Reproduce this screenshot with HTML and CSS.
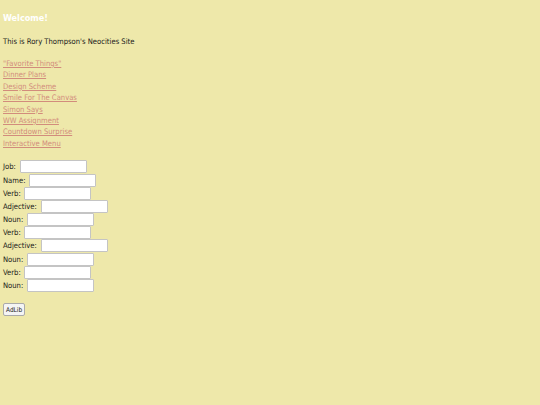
FILE: index.html
```html
<!DOCTYPE html>
<html>
<head>
<meta charset="utf-8">
<title>Rory Thompson's Neocities Site</title>
<link rel="stylesheet" href="styles.css">
</head>
<body>
<h1 class="title">Welcome!</h1>
<p class="intro">This is Rory Thompson's Neocities Site</p>
<nav class="links">
<a href="#">"Favorite Things"</a>
<a href="#">Dinner Plans</a>
<a href="#">Design Scheme</a>
<a href="#">Smile For The Canvas</a>
<a href="#">Simon Says</a>
<a href="#">WW Assignment</a>
<a href="#">Countdown Surprise</a>
<a href="#">Interactive Menu</a>
</nav>
<form class="adlib">
<div class="row">Job: <input type="text"></div>
<div class="row">Name: <input type="text"></div>
<div class="row">Verb: <input type="text"></div>
<div class="row">Adjective: <input type="text"></div>
<div class="row">Noun: <input type="text"></div>
<div class="row">Verb: <input type="text"></div>
<div class="row">Adjective: <input type="text"></div>
<div class="row">Noun: <input type="text"></div>
<div class="row">Verb: <input type="text"></div>
<div class="row">Noun: <input type="text"></div>
<button type="button" class="btn">AdLib</button>
</form>
</body>
</html>
```
FILE: styles.css
```css
html, body {
  margin: 0;
  padding: 0;
  background: #eee8aa;
}
body {
  padding: 0 3px;
  font-family: "DejaVu Sans Condensed", "DejaVu Sans", sans-serif;
  font-stretch: condensed;
  font-size: 7.6px;
  color: #1a1a1a;
}
.title {
  margin: 12px 0 0;
  font-size: 9px;
  line-height: 12px;
  font-weight: bold;
  color: #fff;
}
.intro {
  margin: 12px 0 0;
  line-height: 12px;
}
.links {
  margin-top: 10px;
  display: flex;
  flex-direction: column;
  align-items: flex-start;
}
.links a {
  color: #d28c7c;
  line-height: 11.4px;
}
.adlib {
  margin-top: 11px;
}
.row {
  height: 13.2px;
  display: flex;
  align-items: center;
  white-space: pre;
}
.row input {
  width: 63px;
  height: 11px;
  margin: 0 0 0 1.5px;
  padding: 0 1px;
  border: 1px solid #c4c4c4;
  border-radius: 1px;
  background: #fff;
  font-size: 7px;
}
.btn {
  margin-top: 11px;
  font-family: "DejaVu Sans Condensed", "DejaVu Sans", sans-serif;
  font-size: 6.5px;
  padding: 1px 2px;
  height: 13px;
  background: #f4f4f4;
  border: 1px solid #aaa;
  border-radius: 2px;
  color: #222;
}
```
